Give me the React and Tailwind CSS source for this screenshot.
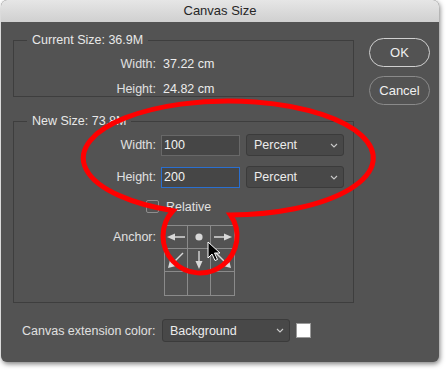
import React from 'react';

function Chevron() {
  return (
    <svg width="8" height="5" viewBox="0 0 8 5" className="shrink-0">
      <path d="M1 1 L4 4 L7 1" fill="none" stroke="#c8c8c8" strokeWidth="1.1" />
    </svg>
  );
}

function Dropdown({ label, width }) {
  return (
    <div className={`${width} h-[22px] flex items-center justify-between pl-[7px] pr-[5px] bg-[#484848] border border-[#3b3b3b] rounded-[3px] text-[#ececec]`}>
      <span>{label}</span>
      <Chevron />
    </div>
  );
}

function Cell({ children, last, bottom }) {
  return (
    <div className={`w-[23px] h-[23px] border-[#8a8a8a] ${last ? '' : 'border-r'} ${bottom ? '' : 'border-b'} flex items-center justify-center`}>
      {children}
    </div>
  );
}

const arrow = '#d8d8d8';

function AnchorGrid() {
  return (
    <div className="grid grid-cols-[repeat(3,23px)] border border-[#8a8a8a]">
      <Cell>
        <svg width="22" height="22" viewBox="0 0 22 22">
          <line x1="9" y1="11" x2="20" y2="11" stroke={arrow} strokeWidth="1.4" />
          <polygon points="2,11 10,7.5 10,14.5" fill={arrow} />
        </svg>
      </Cell>
      <Cell>
        <svg width="22" height="22" viewBox="0 0 22 22">
          <circle cx="11" cy="11" r="3.6" fill={arrow} />
        </svg>
      </Cell>
      <Cell last>
        <svg width="22" height="22" viewBox="0 0 22 22">
          <line x1="2" y1="11" x2="13" y2="11" stroke={arrow} strokeWidth="1.4" />
          <polygon points="20,11 12,7.5 12,14.5" fill={arrow} />
        </svg>
      </Cell>
      <Cell>
        <svg width="22" height="22" viewBox="0 0 22 22">
          <line x1="18" y1="4" x2="8" y2="14" stroke={arrow} strokeWidth="1.4" />
          <polygon points="3,19 5,11 11,17" fill={arrow} />
        </svg>
      </Cell>
      <Cell>
        <svg width="22" height="22" viewBox="0 0 22 22">
          <line x1="11" y1="2" x2="11" y2="13" stroke={arrow} strokeWidth="1.4" />
          <polygon points="11,20 7.5,12 14.5,12" fill={arrow} />
        </svg>
      </Cell>
      <Cell last>
        <svg width="22" height="22" viewBox="0 0 22 22">
          <line x1="4" y1="4" x2="14" y2="14" stroke={arrow} strokeWidth="1.4" />
          <polygon points="19,19 17,11 11,17" fill={arrow} />
        </svg>
      </Cell>
      <Cell bottom />
      <Cell bottom />
      <Cell bottom last />
    </div>
  );
}

export default function App() {
  return (
    <div className="relative w-[448px] h-[371px] bg-white pl-px font-['Liberation_Sans',Arial,sans-serif] text-[12.5px] leading-[16px] text-[#e0e0e0]">
      {/* dialog window */}
      <div className="w-[438px] h-[362px] bg-[#535353] rounded-[6px] overflow-hidden shadow-[1px_2px_5px_rgba(0,0,0,0.5)] flex flex-col">
        <div className="h-[22px] shrink-0 bg-gradient-to-b from-[#e6e6e6] to-[#d0d0d0] text-[13px] text-[#262626] flex items-center justify-center">
          Canvas Size
        </div>

        <div className="flex">
          <div className="pl-[12px] pt-[18px]">
            {/* Current size */}
            <div className="w-[341px] h-[57px] border border-[#3e3e3e]">
              <div className="-mt-[9px] ml-[13px] px-[5px] w-fit bg-[#535353] text-[#e8e8e8]">Current Size: 36.9M</div>
              <div className="mt-[8px] flex">
                <span className="w-[142px] text-right">Width:</span>
                <span className="ml-[7px] text-[#ececec]">37.22 cm</span>
              </div>
              <div className="mt-[9px] flex">
                <span className="w-[142px] text-right">Height:</span>
                <span className="ml-[7px] text-[#ececec]">24.82 cm</span>
              </div>
            </div>

            {/* New size */}
            <div className="mt-[24px] w-[341px] h-[182px] border border-[#3e3e3e]">
              <div className="-mt-[9px] ml-[13px] px-[5px] w-fit bg-[#535353] text-[#e8e8e8]">New Size: 73.8M</div>
              <div className="mt-[5px] flex items-center h-[22px]">
                <span className="w-[142px] text-right">Width:</span>
                <div className="ml-[5px] w-[79px] h-[21px] flex items-center pl-[2px] bg-[#464646] border border-[#686868] text-[#f2f2f2]">100</div>
                <div className="ml-[6px]"><Dropdown label="Percent" width="w-[98px]" /></div>
              </div>
              <div className="mt-[10px] flex items-center h-[22px]">
                <span className="w-[142px] text-right">Height:</span>
                <div className="ml-[5px] w-[79px] h-[21px] flex items-center pl-[2px] bg-[#464646] border border-[#2a6fd0] text-[#f2f2f2]">200</div>
                <div className="ml-[6px]"><Dropdown label="Percent" width="w-[98px]" /></div>
              </div>
              <div className="mt-[12px] flex items-center h-[13px] pl-[132px]">
                <div className="w-[13px] h-[13px] border border-[#8e8e8e] rounded-[2px]" />
                <span className="ml-[7px]">Relative</span>
              </div>
              <div className="mt-[12px] flex items-start">
                <span className="w-[142px] h-[23px] flex items-center justify-end">Anchor:</span>
                <div className="ml-[8px]"><AnchorGrid /></div>
              </div>
            </div>
          </div>

          <div className="ml-[15px] pt-[16px] flex flex-col gap-[9px] text-[13px] text-[#f0f0f0]">
            <div className="w-[61px] h-[29px] rounded-full border border-[#d0d0d0] flex items-center justify-center">OK</div>
            <div className="w-[61px] h-[29px] rounded-full border border-[#8a8a8a] flex items-center justify-center">Cancel</div>
          </div>
        </div>

        <div className="mt-[16px] pl-[21px] flex items-center">
          <span className="w-[134px]">Canvas extension color:</span>
          <div className="ml-[6px]">
            <div className="w-[128px] h-[23px] flex items-center justify-between pl-[7px] pr-[5px] bg-[#484848] border border-[#3b3b3b] rounded-[3px] text-[#ececec]">
              <span>Background</span>
              <Chevron />
            </div>
          </div>
          <div className="ml-[6px] w-[15px] h-[15px] bg-white border border-[#9a9a9a]" />
        </div>
      </div>

      {/* red callout annotation drawn over the dialog */}
      <svg className="absolute left-0 top-0 pointer-events-none" width="448" height="371" viewBox="0 0 448 371">
        <path
          d="M 173 210.7 A 145 57 0 1 1 230.5 215 A 37 37 0 1 1 173 210.7 Z"
          fill="none"
          stroke="#ff0000"
          strokeWidth="5"
          strokeLinejoin="miter"
        />
        <path
          d="M 208 242 L 208 258 L 212 254 L 215 260.5 L 217.5 259.5 L 214.5 253 L 220 253 Z"
          fill="#000"
          stroke="#fff"
          strokeWidth="1"
        />
      </svg>
    </div>
  );
}
